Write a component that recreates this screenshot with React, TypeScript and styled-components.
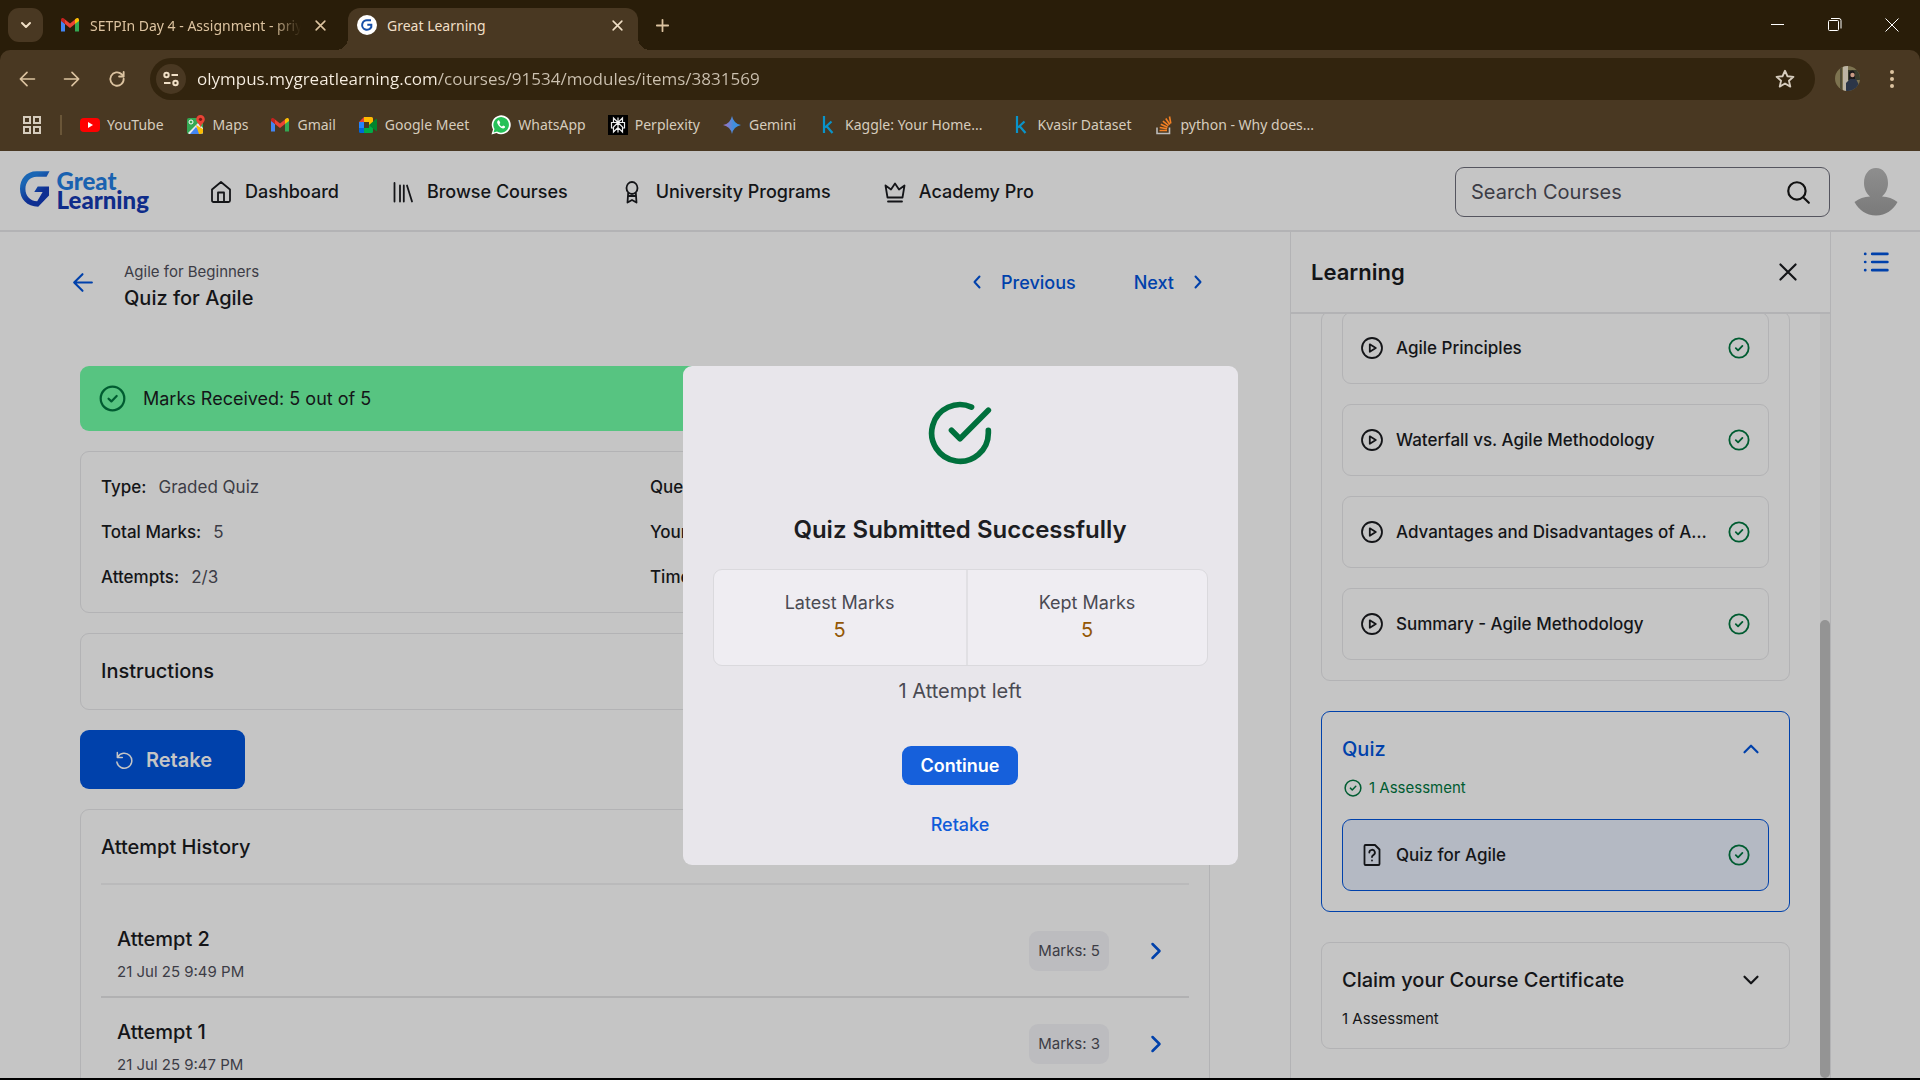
import React from "react";
import styled, { createGlobalStyle, css } from "styled-components";

const c = {
  strip: "#291d09",
  bar: "#493822",
  omni: "#32240e",
  tan: "#dcc3a0",
  label: "#d6ccbd",
  page: "#c5c5c5",
  line: "#b3b3b5",
  ink: "#141518",
  grey: "#3c3c45",
  blue: "#0041ab",
  green: "#005c31",
};

const Global = createGlobalStyle`
  * { box-sizing: border-box; }
  html, body { margin: 0; height: 100%; background: #000; overflow: hidden; }
  body { font-family: Inter, "Liberation Sans", sans-serif; color: ${c.ink}; }
  button { font: inherit; color: inherit; background: none; border: 0; padding: 0; margin: 0; cursor: pointer; }
  a { color: inherit; text-decoration: none; }
  h1, h2, h3, p, dl, dt, dd, ul { margin: 0; padding: 0; font-weight: inherit; font-size: inherit; }
  ul { list-style: none; }
  svg { display: block; flex: none; }
`;

const Screen = styled.div`
  height: 100vh;
  display: flex;
  flex-direction: column;
  padding-bottom: 2px;
`;

/* ---------- browser frame ---------- */

const Chrome = styled.header`
  flex: none;
  background: ${c.strip};
  font-family: "Noto Sans", "Open Sans", sans-serif;
  color: ${c.label};
`;

const TabStrip = styled.div`
  display: flex;
  align-items: center;
  height: 50px;
  padding-left: 8px;
`;

const TabSearch = styled.button`
  width: 35px;
  height: 34px;
  border-radius: 11px;
  background: ${c.bar};
  display: grid;
  place-items: center;
`;

const Tab = styled.div<{ $active?: boolean }>`
  display: flex;
  align-items: center;
  gap: 10px;
  width: ${(p) => (p.$active ? 290 : 305)}px;
  height: 42px;
  margin-top: 8px;
  padding: ${(p) => (p.$active ? "0 13px 8px 9px" : "0 20px 8px 17px")};
  border-radius: 12px 12px 0 0;
  background: ${(p) => (p.$active ? c.bar : "transparent")};
  color: ${(p) => (p.$active ? "#f0dfc6" : c.tan)};
  font-size: 14px;
  position: relative;
  ${(p) =>
    p.$active &&
    css`
      &::before,
      &::after {
        content: "";
        position: absolute;
        bottom: 0;
        width: 12px;
        height: 12px;
      }
      &::before {
        left: -12px;
        background: radial-gradient(circle at 0 0, transparent 12px, ${c.bar} 12px);
      }
      &::after {
        right: -12px;
        background: radial-gradient(circle at 100% 0, transparent 12px, ${c.bar} 12px);
      }
    `}
`;

const TabTitle = styled.span<{ $fade?: boolean }>`
  flex: 1;
  min-width: 0;
  overflow: hidden;
  white-space: nowrap;
  ${(p) => p.$fade && css`mask-image: linear-gradient(90deg, #000 86%, transparent 99%);`}
`;

const NewTab = styled.button`
  padding: 0 16px;
  color: ${c.tan};
`;

const WindowControls = styled.div`
  margin-left: auto;
  display: flex;
  align-items: center;
  color: #fff;
  button {
    width: 57px;
    height: 40px;
    display: grid;
    place-items: center;
  }
`;

const Toolbar = styled.div`
  display: flex;
  align-items: center;
  height: 57px;
  padding: 0 16px 0 17px;
  background: ${c.bar};
  border-radius: 10px 10px 0 0;
  color: ${c.tan};
`;

const ToolButtons = styled.div`
  display: flex;
  gap: 25px;
  margin-right: 23px;
`;

const Omnibox = styled.div`
  flex: 1;
  display: flex;
  align-items: center;
  gap: 11px;
  height: 42px;
  margin-right: 20px;
  padding: 0 19px 0 6px;
  border-radius: 21px;
  background: ${c.omni};
`;

const SiteInfo = styled.button`
  width: 30px;
  height: 30px;
  border-radius: 50%;
  background: ${c.bar};
  display: grid;
  place-items: center;
  color: #f0dfc6;
`;

const Address = styled.input`
  flex: 1;
  min-width: 0;
  border: 0;
  padding: 0;
  outline: 0;
  font: 17px/24px "Open Sans", "Noto Sans", sans-serif;
  color: transparent;
  background: linear-gradient(90deg, #f8efe2 241px, #cdc2b1 241px);
  background-clip: text;
  -webkit-background-clip: text;
`;

const MenuButton = styled.button`
  margin-left: 20px;
`;

const Bookmarks = styled.nav`
  display: flex;
  align-items: center;
  height: 44px;
  padding: 0 0 9px 22px;
  background: ${c.bar};
  font-size: 14px;
`;

const Divider = styled.span`
  width: 2px;
  height: 20px;
  margin: 0 18px 0 18px;
  background: #6a5638;
`;

const Bookmark = styled.a<{ $wide?: boolean }>`
  display: flex;
  align-items: center;
  gap: 7px;
  margin-right: ${(p) => (p.$wide ? 28 : 22)}px;
  white-space: nowrap;
`;

/* ---------- site header ---------- */

const Page = styled.div`
  flex: 1;
  min-height: 0;
  display: flex;
  flex-direction: column;
  background: ${c.page};
  position: relative;
  overflow: hidden;
`;

const SiteHeader = styled.header`
  flex: none;
  display: flex;
  align-items: center;
  height: 81px;
  padding: 2px 22px 0 20px;
  border-bottom: 2px solid ${c.line};
`;

const Logo = styled.a`
  display: flex;
  gap: 7px;
  width: 189px;
  padding-bottom: 4px;
  font: 900 24px/19px Lato, "Open Sans", sans-serif;
`;

const LogoWords = styled.span`
  display: flex;
  flex-direction: column;
  color: #0f2c8a;
  span:first-child {
    color: #1a62b0;
  }
`;

const NavLinks = styled.nav`
  display: flex;
  gap: 52px;
  font-size: 18px;
  font-weight: 500;
  a {
    display: flex;
    align-items: center;
    gap: 12px;
  }
`;

const SearchBox = styled.label`
  display: flex;
  align-items: center;
  width: 375px;
  height: 50px;
  margin: 0 24px 0 auto;
  padding: 0 18px 0 15px;
  border: 1px solid #55555f;
  border-radius: 9px;
`;

const SearchInput = styled.input`
  flex: 1;
  min-width: 0;
  border: 0;
  outline: 0;
  padding: 0;
  background: none;
  font: 20px/28px Inter, sans-serif;
  color: ${c.grey};
  &::placeholder {
    color: ${c.grey};
    opacity: 1;
  }
`;

/* ---------- quiz content ---------- */

const Body = styled.div`
  flex: 1;
  min-height: 0;
  display: flex;
`;

const Main = styled.main`
  flex: 1;
  min-width: 0;
  overflow: hidden;
  padding: 28px 80px 0;
  display: flex;
  flex-direction: column;
  gap: 20px;
  & > * {
    flex: none;
  }
`;

const TitleRow = styled.div`
  display: flex;
  align-items: flex-start;
  margin: 0 0 34px -10px;
  button {
    display: flex;
    align-items: center;
    gap: 12px;
    height: 44px;
  }
`;

const Titles = styled.div`
  margin-left: 29px;
  p {
    font-size: 15px;
    line-height: 24px;
    color: ${c.grey};
  }
  h1 {
    font-size: 20px;
    line-height: 28px;
    font-weight: 500;
  }
`;

const Pager = styled.div`
  margin-left: auto;
  display: flex;
  gap: 58px;
  font-size: 18px;
  font-weight: 500;
  color: ${c.blue};
`;

const Banner = styled.div`
  display: flex;
  align-items: center;
  gap: 17px;
  height: 65px;
  padding: 0 19px;
  border-radius: 9px;
  background: #57c481;
  font-size: 18px;
`;

const Panel = styled.section`
  border: 1px solid ${c.line};
  border-radius: 9px;
  padding: 20px;
`;

const Facts = styled.dl`
  display: grid;
  grid-template-columns: 1fr 1fr;
  gap: 15px 10px;
  font-size: 17px;
  line-height: 30px;
  div {
    display: flex;
    gap: 12px;
  }
  dt {
    font-weight: 500;
  }
  dd {
    color: ${c.grey};
  }
`;

const PanelTitle = styled.h2<{ $ruled?: boolean }>`
  font-size: 20px;
  line-height: 35px;
  font-weight: 500;
  ${(p) =>
    p.$ruled &&
    css`
      padding-bottom: 18px;
      border-bottom: 2px solid #bababb;
      margin-bottom: 20px;
    `}
`;

const RetakeButton = styled.button`
  align-self: flex-start;
  display: flex;
  align-items: center;
  gap: 12px;
  height: 59px;
  padding: 0 33px 0 34px;
  border-radius: 9px;
  background: ${c.blue};
  color: ${c.page};
  font-size: 20px;
  font-weight: 600;
`;

const Attempt = styled.li`
  display: flex;
  align-items: center;
  padding: 0 21px 0 16px;
  border-bottom: 2px solid #b1b1b2;
`;

const AttemptText = styled.div`
  flex: 1;
  padding: 20px 0 12px;
  h3 {
    font-size: 20px;
    line-height: 28px;
    font-weight: 500;
    margin-bottom: 7px;
  }
  p {
    font-size: 15px;
    line-height: 24px;
    color: ${c.grey};
  }
`;

const Pill = styled.span`
  margin-right: 35px;
  padding: 0 9px;
  line-height: 40px;
  border-radius: 9px;
  background: #bcbcbf;
  color: ${c.grey};
  font-size: 15px;
`;

/* ---------- learning sidebar ---------- */

const Sidebar = styled.aside`
  width: 541px;
  flex: none;
  display: flex;
  flex-direction: column;
  border: 1px solid ${c.line};
  border-width: 0 1px;
`;

const SideHead = styled.div`
  flex: none;
  display: flex;
  align-items: center;
  justify-content: space-between;
  height: 82px;
  padding: 0 29px 0 20px;
  border-bottom: 2px solid ${c.line};
  font-size: 22px;
  font-weight: 600;
`;

const SideBody = styled.div`
  flex: 1;
  min-height: 0;
  display: flex;
`;

const Modules = styled.div`
  flex: 1;
  min-width: 0;
  overflow: hidden;
  display: flex;
  flex-direction: column;
  justify-content: flex-end;
  gap: 30px;
  padding: 0 30px 29px;
`;

const Track = styled.div`
  width: 10px;
  display: flex;
  align-items: flex-end;
  background: #bfbfbf;
`;

const Thumb = styled.div`
  width: 100%;
  height: 60%;
  border-radius: 5px;
  background: #949494;
`;

const Module = styled.section<{ $active?: boolean }>`
  flex: none;
  border: 1px solid ${(p) => (p.$active ? c.blue : c.line)};
  border-radius: 9px;
`;

const ModuleHead = styled.button<{ $active?: boolean }>`
  display: grid;
  grid-template-columns: 1fr auto;
  align-items: center;
  row-gap: 10px;
  width: 100%;
  padding: 20px 25px 19px 20px;
  text-align: left;
  font-size: 20px;
  line-height: 34px;
  font-weight: 500;
  color: ${(p) => (p.$active ? c.blue : c.ink)};
  &:only-child {
    padding-bottom: 17px;
  }
`;

const ModuleNote = styled.span<{ $done?: boolean }>`
  grid-column: 1 / -1;
  display: flex;
  align-items: center;
  gap: 7px;
  padding-left: ${(p) => (p.$done ? 2 : 0)}px;
  font-size: 15px;
  line-height: 24px;
  font-weight: 400;
  color: ${(p) => (p.$done ? c.green : c.ink)};
`;

const Lessons = styled.div`
  display: grid;
  gap: 20px;
  padding: 0 20px 20px;
`;

const Lesson = styled.a<{ $active?: boolean }>`
  display: flex;
  align-items: center;
  gap: 12px;
  min-width: 0;
  height: 72px;
  padding: 0 18px 0 17px;
  border: 1px solid ${(p) => (p.$active ? c.blue : c.line)};
  border-radius: 9px;
  background: ${(p) => (p.$active ? "#b4b9c3" : "transparent")};
  font-size: 17px;
  font-weight: 500;
  line-height: 26px;
  span {
    flex: 1;
    overflow: hidden;
    white-space: nowrap;
    text-overflow: ellipsis;
  }
`;

const Rail = styled.div`
  width: 89px;
  flex: none;
  display: flex;
  justify-content: center;
  align-items: flex-start;
  padding-top: 17px;
  color: ${c.blue};
`;

/* ---------- result dialog ---------- */

const Overlay = styled.div`
  position: absolute;
  inset: 0;
  display: grid;
  place-items: center;
  padding-top: 2px;
`;

const Dialog = styled.div`
  width: 555px;
  padding: 33px 30px 20px;
  border-radius: 9px;
  background: #e8e6eb;
  display: flex;
  flex-direction: column;
  align-items: center;
  h2 {
    margin: 45px 0 21px;
    font-size: 24px;
    line-height: 36px;
    font-weight: 600;
    color: #1c1d22;
  }
`;

const Scores = styled.dl`
  align-self: stretch;
  display: flex;
  height: 97px;
  margin-bottom: 10px;
  border: 1px solid #dad9dd;
  border-radius: 9px;
  background: #efedf2;
  text-align: center;
  div {
    flex: 1 1 auto;
    padding-top: 20px;
  }
  div + div {
    border-left: 2px solid #e1e0e4;
  }
  dt {
    font-size: 18px;
    line-height: 26px;
    color: #4a4a52;
  }
  dd {
    font-size: 20px;
    line-height: 28px;
    color: #935706;
  }
`;

const Left = styled.p`
  font-size: 20px;
  line-height: 30px;
  color: #4a4a52;
`;

const Continue = styled.button`
  margin: 40px 0 20px;
  height: 39px;
  padding: 0 19px;
  border-radius: 9px;
  background: #1660db;
  color: #fff;
  font-size: 18px;
  font-weight: 600;
`;

const DialogLink = styled.button`
  font-size: 18px;
  line-height: 40px;
  font-weight: 500;
  color: #0f5bd9;
`;

/* ---------- icons ---------- */

type IconProps = { d: string; size?: number; w?: number; color?: string; box?: string };
const Icon = ({ d, size = 24, w = 2, color = "currentColor", box = "0 0 24 24" }: IconProps) => (
  <svg width={size} height={size} viewBox={box} fill="none" stroke={color} strokeWidth={w} strokeLinecap="round" strokeLinejoin="round" aria-hidden="true">
    <path d={d} />
  </svg>
);

const P = {
  down: "M6 9l6 6 6-6",
  up: "M6 15l6-6 6 6",
  left: "M14.5 6.5L9.5 12l5 5.5",
  right: "M9.5 6.5l5 5.5-5 5.5",
  x: "M5 5l14 14M19 5L5 19",
  plus: "M12 4v16M4 12h16",
  back: "M21 12H4M12 4l-8 8 8 8",
  forward: "M3 12h17M12 4l8 8-8 8",
  reload: "M20 11.5a8 8 0 1 1-2.4-5.2L20 9M20 3.5V9h-5.5",
  home: "M3 9.5L12 2l9 7.500V20.500a1.500 1.500 0 0 1-1.500 1.500h-15A1.500 1.500 0 0 1 3 20.500zM9 22v-9.500h6V22",
  books: "M3.500 3v18.500M9 5.500v16M12.800 5.500v16M16 5.500l5 16",
  award: "M12 2a5.500 6 0 1 1 0 12a5.500 6 0 1 1 0-12zM8.200 12.500L7.500 22.500 12 20l4.500 2.500-.7-10M9 16h6",
  crown: "M4.500 17.500L2.500 5.500l5.500 4 4-6 4 6 5.500-4-2 12zM5 21.500h14",
  search: "M11 3a8 8 0 1 1 0 16a8 8 0 1 1 0-16zM17.500 17.500l4.500 4.500",
  check: "M12 1.500a10.500 10.500 0 1 1 0 21a10.500 10.500 0 1 1 0-21zM8.500 12.200l2.500 2.400 4.700-4.800",
  play: "M12 2a10 10 0 1 1 0 20a10 10 0 1 1 0-20zM9.800 8.300l6 3.700-6 3.700z",
  retake: "M4 3v6h6M4.500 8.500a9 9 0 1 1-1 6",
  file: "M5.500 2h9.500l4.500 4.500V21a1 1 0 0 1-1 1h-13a1 1 0 0 1-1-1V3a1 1 0 0 1 1-1zM9.300 9.500a2.800 2.800 0 1 1 4 2.600c-.9.5-1.300.9-1.300 2M12 17.500v.1",
  list: "M8.500 4.500h14M8.500 12h14M8.500 19.500h14M2 4.500h.1M2 12h.1M2 19.500h.1",
  done: "M22 11.080V12a10 10 0 1 1-5.930-9.140M22 4L12 14.010l-3-3",
  star: "M12 3l2.700 6 6.500.6-4.900 4.300 1.500 6.400L12 16.900l-5.800 3.400 1.500-6.400-4.900-4.300 6.500-.6z",
};

const GmailIcon = () => (
  <svg width="20" height="20" viewBox="0 0 20 20" aria-hidden="true">
    <path d="M1 5v11.500h4V9z" fill="#4285f4" />
    <path d="M19 5v11.500h-4V9z" fill="#34a853" />
    <path d="M5 9V4.500l5 4 5-4V9l-5 4z" fill="#ea4335" />
    <path d="M1 5c0-2 2-2.500 3.300-1.300L5 4.300V9L1 6z" fill="#c5221f" />
    <path d="M19 5c0-2-2-2.500-3.300-1.300l-.7.600V9l4-3z" fill="#fbbc04" />
  </svg>
);

const GMark = ({ size = 36 }: { size?: number }) => (
  <svg width={size * 0.82} height={size} viewBox="0 0 30 36" aria-hidden="true">
    <defs>
      <linearGradient id={`gm${size}`} x1="0" y1="0" x2=".6" y2="1">
        <stop offset=".3" stopColor="#1a66b4" />
        <stop offset=".75" stopColor="#0f2f92" />
      </linearGradient>
    </defs>
    <path
      d="M30 0H17C6 0 0 8 0 18s7 18 18.500 18l11-11.500V15.500H18l-3.500 5.500h8.500L17.500 30.500C10 30 5.500 25 5.500 18S10 5.500 17 5.500h10z"
      fill={`url(#gm${size})`}
    />
  </svg>
);

const Favicon = () => (
  <svg width="20" height="20" viewBox="0 0 20 20" aria-hidden="true">
    <circle cx="10" cy="10" r="10" fill="#fff" />
    <path d="M14 5.200H10.500A4.800 4.800 0 1 0 14.300 12V9.800h-4" fill="none" stroke="#174fa8" strokeWidth="2" />
  </svg>
);

const YouTubeIcon = () => (
  <svg width="20" height="20" viewBox="0 0 20 20" aria-hidden="true">
    <rect x="0" y="3" width="20" height="14" rx="4" fill="#f00" />
    <path d="M8 7l5 3-5 3z" fill="#fff" />
  </svg>
);

const MapsIcon = () => (
  <svg width="20" height="20" viewBox="0 0 20 20" aria-hidden="true">
    <rect x="1" y="3" width="16" height="16" rx="2" fill="#34a853" />
    <path d="M2 18L12 8l5 5v4a2 2 0 0 1-2 2H3z" fill="#e8eaed" />
    <path d="M4 19l6-7 7 7z" fill="#4285f4" />
    <path d="M10 10l3 9h2a2 2 0 0 0 2-2v-3z" fill="#fbbc04" />
    <circle cx="5" cy="7" r="2" fill="none" stroke="#fff" />
    <path d="M14.500 0a4.300 4.300 0 0 1 4.300 4.300c0 3-3 4-4.300 8-1.300-4-4.300-5-4.300-8A4.300 4.300 0 0 1 14.500 0z" fill="#ea4335" />
    <circle cx="14.500" cy="4.300" r="1.600" fill="#7b1a12" />
  </svg>
);

const MeetIcon = () => (
  <svg width="20" height="20" viewBox="0 0 20 20" aria-hidden="true">
    <path d="M1 7l5-5v5z" fill="#ea4335" />
    <path d="M1 7h5v6H1z" fill="#2684fc" />
    <path d="M1 13h5v5H2.500A1.500 1.500 0 0 1 1 16.500z" fill="#0066da" />
    <path d="M6 2h7.500A1.500 1.500 0 0 1 15 3.500V8l-4 3V7H6z" fill="#ffba00" />
    <path d="M6 18v-5h5v-3l4 3v3.500a1.500 1.500 0 0 1-1.500 1.500z" fill="#00ac47" />
    <path d="M11 10l7-6c.5-.4 1-.2 1 .5v11c0 .7-.5.900-1 .5z" fill="#00832d" />
  </svg>
);

const WhatsAppIcon = () => (
  <svg width="20" height="20" viewBox="0 0 20 20" aria-hidden="true">
    <path d="M.500 19.500L2 14.500A9.500 9.500 0 1 1 5.500 18z" fill="#fff" />
    <path d="M2.500 17.500l1-3.500A7.800 7.800 0 1 1 6 16.500z" fill="#25c158" />
    <path d="M7 5.500c-1.500 1-1 3 .8 5.200s4.300 3.500 5.900 2.100c.6-.6.5-1.300 0-1.600l-1.500-.8-1.200 1.100C9.700 11 8.800 10 8.400 8.900l.9-1L8.500 6c-.3-.6-.9-.8-1.500-.5z" fill="#fff" />
  </svg>
);

const PerplexityIcon = () => (
  <svg width="20" height="20" viewBox="0 0 20 20" aria-hidden="true">
    <rect width="20" height="20" fill="#000" />
    <path d="M10 2.500v15M5.500 3v4.500H10L5.500 3zM14.500 3v4.500H10L14.500 3zM3.500 7.500h13v5.500h-2V12L10 7.500 5.500 12v1h-2zM5.500 12v5l4.500-4.500 4.500 4.500v-5" fill="none" stroke="#eee" strokeWidth="1.200" />
  </svg>
);

const GeminiIcon = () => (
  <svg width="20" height="20" viewBox="0 0 20 20" aria-hidden="true">
    <defs>
      <linearGradient id="gem">
        <stop offset=".2" stopColor="#8a78c8" />
        <stop offset=".6" stopColor="#3f8fe0" />
      </linearGradient>
    </defs>
    <path d="M10 1q1.500 7.500 9 9-7.500 1.500-9 9-1.500-7.500-9-9 7.500-1.500 9-9z" fill="url(#gem)" />
  </svg>
);

const KaggleIcon = () => (
  <svg width="20" height="20" viewBox="0 0 20 20" fill="none" stroke="#0a93c9" strokeWidth="2.200" aria-hidden="true">
    <path d="M6 1v17M13.500 6.500L7 12.500M8.500 11l6 7" />
  </svg>
);

const StackIcon = () => (
  <svg width="20" height="20" viewBox="0 0 20 20" fill="none" strokeWidth="1.600" aria-hidden="true">
    <path d="M3 12.500v6h12.500v-6" stroke="#bcbbbb" />
    <path d="M5.500 15.500H13M5.700 12.500l7.300 1.200M6.800 9.300l6.800 3M8.900 6.100l5.600 4.500M11.800 3.500l4 6M15.500 1.500l1.300 7" stroke="#f48024" />
  </svg>
);

const ProfilePhoto = () => (
  <svg width="25" height="25" viewBox="0 0 25 25" aria-hidden="true">
    <clipPath id="pp"><circle cx="12.500" cy="12.500" r="12.500" /></clipPath>
    <g clipPath="url(#pp)">
      <rect width="25" height="25" fill="#7d7350" />
      <path d="M5 0h2v25H5z" fill="#4f4a34" />
      <path d="M8 0h5v25H8z" fill="#bdb4a4" />
      <path d="M13 4h12v10H13z" fill="#3a3d2c" />
      <path d="M14 6q5-4 6 2v6h-6z" fill="#1c1a1c" />
      <circle cx="17.500" cy="9" r="2.200" fill="#c89a84" />
      <path d="M11 25v-8l4-4h6l3 6v6z" fill="#2c3648" />
    </g>
  </svg>
);

const Avatar = () => (
  <svg width="44" height="48" viewBox="0 0 44 48" aria-hidden="true">
    <defs>
      <linearGradient id="av" x2="0" y2="1">
        <stop stopColor="#8e8e8e" />
        <stop offset="1" stopColor="#7a7a7a" />
      </linearGradient>
    </defs>
    <path d="M22 0c7 0 12 6 12 15 0 6-2.500 10.500-6 13.500 6 .2 11 2 15.500 5.500C39 42 32 47.500 22 47.500S5 42 .500 34C5 30.500 10 28.700 16 28.500c-3.500-3-6-7.500-6-13.500C10 6 15 0 22 0z" fill="url(#av)" />
  </svg>
);

/* ---------- data ---------- */

const bookmarks: [string, React.ReactNode, boolean?][] = [
  ["YouTube", <YouTubeIcon />],
  ["Maps", <MapsIcon />],
  ["Gmail", <GmailIcon />],
  ["Google Meet", <MeetIcon />],
  ["WhatsApp", <WhatsAppIcon />],
  ["Perplexity", <PerplexityIcon />],
  ["Gemini", <GeminiIcon />],
  ["Kaggle: Your Home...", <KaggleIcon />, true],
  ["Kvasir Dataset", <KaggleIcon />],
  ["python - Why does...", <StackIcon />],
];

const nav = [
  ["Dashboard", P.home],
  ["Browse Courses", P.books],
  ["University Programs", P.award],
  ["Academy Pro", P.crown],
];

const facts = [
  ["Type:", "Graded Quiz"],
  ["Questions:", "5"],
  ["Total Marks:", "5"],
  ["Your Marks:", "5"],
  ["Attempts:", "2/3"],
  ["Time:", "No limit"],
];

const attempts = [
  ["Attempt 2", "21 Jul 25 9:49 PM", "Marks: 5"],
  ["Attempt 1", "21 Jul 25 9:47 PM", "Marks: 3"],
];

const lessons = [
  "Agile Principles",
  "Waterfall vs. Agile Methodology",
  "Advantages and Disadvantages of Agile Methodology",
  "Summary - Agile Methodology",
];

export default function App() {
  return (
    <Screen>
      <Global />
      <Chrome>
        <TabStrip>
          <TabSearch aria-label="Search tabs">
            <Icon d={P.down} size={16} w={3} color="#f0dfc6" />
          </TabSearch>
          <Tab>
            <GmailIcon />
            <TabTitle $fade>SETPIn Day 4 - Assignment - priya</TabTitle>
            <button aria-label="Close tab"><Icon d={P.x} size={15} w={2.500} /></button>
          </Tab>
          <Tab $active>
            <Favicon />
            <TabTitle>Great Learning</TabTitle>
            <button aria-label="Close tab"><Icon d={P.x} size={15} w={2.500} /></button>
          </Tab>
          <NewTab aria-label="New tab"><Icon d={P.plus} size={17} w={2.500} /></NewTab>
          <WindowControls>
            <button aria-label="Minimize">
              <svg width="14" height="14" viewBox="0 0 14 14"><path d="M0 6.500h13" stroke="#fff" /></svg>
            </button>
            <button aria-label="Restore">
              <svg width="14" height="14" viewBox="0 0 14 14" fill="none" stroke="#fff">
                <rect x=".5" y="2.500" width="10" height="10" rx="1" />
                <path d="M3 .5h8a2 2 0 0 1 2 2v8" />
              </svg>
            </button>
            <button aria-label="Close window">
              <svg width="14" height="14" viewBox="0 0 14 14"><path d="M.5 .5l13 13M13.500 .5l-13 13" stroke="#fff" /></svg>
            </button>
          </WindowControls>
        </TabStrip>
        <Toolbar>
          <ToolButtons>
            <button aria-label="Back"><Icon d={P.back} size={20} /></button>
            <button aria-label="Forward"><Icon d={P.forward} size={20} /></button>
            <button aria-label="Reload"><Icon d={P.reload} size={20} w={2.200} /></button>
          </ToolButtons>
          <Omnibox>
            <SiteInfo aria-label="Site information">
              <svg width="18" height="18" viewBox="0 0 18 18" fill="none" stroke="currentColor" strokeWidth="2">
                <circle cx="4.500" cy="5" r="2.200" />
                <path d="M9.500 5H16M2 13h6.500" />
                <circle cx="13.500" cy="13" r="2.200" />
              </svg>
            </SiteInfo>
            <Address aria-label="Address" defaultValue="olympus.mygreatlearning.com/courses/91534/modules/items/3831569" />
            <button aria-label="Bookmark this page"><Icon d={P.star} size={22} color={c.label} /></button>
          </Omnibox>
          <button aria-label="Profile"><ProfilePhoto /></button>
          <MenuButton aria-label="Browser menu">
            <svg width="24" height="24" viewBox="0 0 24 24" fill="currentColor">
              <circle cx="12" cy="5" r="2" /><circle cx="12" cy="12" r="2" /><circle cx="12" cy="19" r="2" />
            </svg>
          </MenuButton>
        </Toolbar>
        <Bookmarks aria-label="Bookmarks">
          <button aria-label="Apps">
            <svg width="20" height="20" viewBox="0 0 20 20" fill="none" stroke={c.label} strokeWidth="2">
              <path d="M2 2h6v6H2zM12 2h6v6h-6zM2 12h6v6H2zM12 12h6v6h-6z" />
            </svg>
          </button>
          <Divider />
          {bookmarks.map(([name, icon, wide]) => (
            <Bookmark key={name} href="#" $wide={wide}>{icon}{name}</Bookmark>
          ))}
        </Bookmarks>
      </Chrome>

      <Page>
        <SiteHeader>
          <Logo href="#" aria-label="Great Learning">
            <GMark />
            <LogoWords><span>Great</span><span>Learning</span></LogoWords>
          </Logo>
          <NavLinks>
            {nav.map(([name, d]) => (
              <a key={name} href="#"><Icon d={d} w={1.800} />{name}</a>
            ))}
          </NavLinks>
          <SearchBox>
            <SearchInput type="text" placeholder="Search Courses" aria-label="Search Courses" />
            <Icon d={P.search} size={26} color="#111" />
          </SearchBox>
          <button aria-label="Account"><Avatar /></button>
        </SiteHeader>

        <Body>
          <Main>
            <TitleRow>
              <button aria-label="Back"><Icon d={P.back} size={25} color={c.blue} /></button>
              <Titles>
                <p>Agile for Beginners</p>
                <h1>Quiz for Agile</h1>
              </Titles>
              <Pager>
                <button><Icon d={P.left} />Previous</button>
                <button>Next<Icon d={P.right} /></button>
              </Pager>
            </TitleRow>

            <Banner><Icon d={P.check} size={27} color={c.green} />Marks Received: 5 out of 5</Banner>

            <Panel>
              <Facts>
                {facts.map(([k, v]) => (
                  <div key={k}><dt>{k}</dt><dd>{v}</dd></div>
                ))}
              </Facts>
            </Panel>

            <Panel><PanelTitle>Instructions</PanelTitle></Panel>

            <RetakeButton><Icon d={P.retake} size={20} w={1.800} />Retake</RetakeButton>

            <Panel>
              <PanelTitle $ruled>Attempt History</PanelTitle>
              <ul>
                {attempts.map(([name, date, marks]) => (
                  <Attempt key={name}>
                    <AttemptText><h3>{name}</h3><p>{date}</p></AttemptText>
                    <Pill>{marks}</Pill>
                    <button aria-label={`Open ${name}`}><Icon d="M8.500 5l7 7-7 7" color={c.blue} w={2.500} /></button>
                  </Attempt>
                ))}
              </ul>
            </Panel>
          </Main>

          <Sidebar>
            <SideHead>
              <h2>Learning</h2>
              <button aria-label="Close"><Icon d={P.x} size={26} /></button>
            </SideHead>
            <SideBody>
              <Modules>
                <Module>
                  <Lessons>
                    {lessons.map((name) => (
                      <Lesson key={name} href="#">
                        <Icon d={P.play} w={1.800} />
                        <span>{name}</span>
                        <Icon d={P.check} size={22} color={c.green} />
                      </Lesson>
                    ))}
                  </Lessons>
                </Module>
                <Module $active>
                  <ModuleHead $active>
                    Quiz<Icon d={P.up} size={26} />
                    <ModuleNote $done><Icon d={P.check} size={18} />1 Assessment</ModuleNote>
                  </ModuleHead>
                  <Lessons>
                    <Lesson href="#" $active>
                      <Icon d={P.file} w={1.800} />
                      <span>Quiz for Agile</span>
                      <Icon d={P.check} size={22} color={c.green} />
                    </Lesson>
                  </Lessons>
                </Module>
                <Module>
                  <ModuleHead>
                    Claim your Course Certificate<Icon d={P.down} size={26} />
                    <ModuleNote>1 Assessment</ModuleNote>
                  </ModuleHead>
                </Module>
              </Modules>
              <Track><Thumb /></Track>
            </SideBody>
          </Sidebar>
          <Rail><button aria-label="Course outline"><Icon d={P.list} size={26} w={2.500} /></button></Rail>
        </Body>

        <Overlay>
          <Dialog role="dialog" aria-modal="true" aria-labelledby="result">
            <Icon d={P.done} size={68} color="#00703c" />
            <h2 id="result">Quiz Submitted Successfully</h2>
            <Scores>
              <div><dt>Latest Marks</dt><dd>5</dd></div>
              <div><dt>Kept Marks</dt><dd>5</dd></div>
            </Scores>
            <Left>1 Attempt left</Left>
            <Continue>Continue</Continue>
            <DialogLink>Retake</DialogLink>
          </Dialog>
        </Overlay>
      </Page>
    </Screen>
  );
}
